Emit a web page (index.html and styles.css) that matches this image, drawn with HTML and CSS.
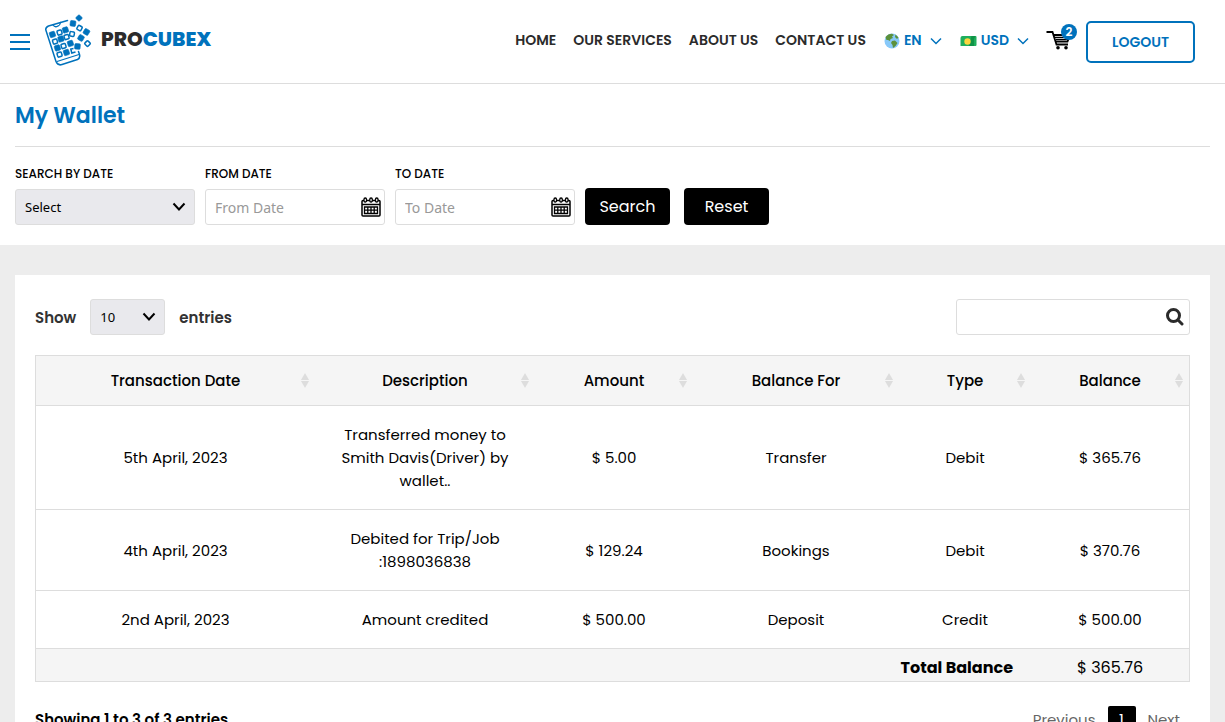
FILE: index.html
```html
<!DOCTYPE html>
<html lang="en">
<head>
    <meta charset="UTF-8">
    <meta name="viewport" content="width=device-width, initial-scale=1.0">
    <title>My Wallet</title>
    <link rel="stylesheet" href="styles.css">
</head>
<body>
    <header class="site-header">
        <button class="menu-toggle" type="button" aria-label="Menu">
            <span></span>
            <span></span>
            <span></span>
        </button>
        <a class="logo" href="#">
            <svg class="logo-mark" viewBox="44 14 48 52" aria-hidden="true">
                <g fill="none" stroke="#0072bc" stroke-linecap="round" stroke-linejoin="round">
                    <path stroke-width="1.5" d="M67.5 20.5 L48.5 26 Q45 27.5 46 30.5 L56 61.5 Q58 66 62 64.5 L77.5 59.5 Q80.5 58 79.5 54.5 L78.5 51.5"/>
                    <path stroke-width="1.3" d="M53 25 Q55 28 58 26 Q60 25.5 60.5 22.5"/>
                    <path stroke-width="1.3" d="M57 61.5 L79 54.5"/>
                </g>
                <g fill="#0072bc" stroke="#0072bc" stroke-width="0.6">
                    <rect x="49.7" y="31.7" width="5.5" height="5.5" rx="1" transform="rotate(-17 52.5 34.5)"/>
                    <rect x="62.7" y="27.2" width="5.5" height="5.5" rx="1" transform="rotate(-17 65.5 30)"/>
                    <rect x="58.2" y="36.2" width="5.5" height="5.5" rx="1" transform="rotate(-17 61 39)"/>
                    <rect x="54.7" y="45.2" width="5.5" height="5.5" rx="1" transform="rotate(-17 57.5 48)"/>
                    <rect x="67.7" y="40.7" width="5.5" height="5.5" rx="1" transform="rotate(-17 70.5 43.5)"/>
                    <rect x="63.7" y="49.7" width="5.5" height="5.5" rx="1" transform="rotate(-17 66.5 52.5)"/>
                    <rect x="74.7" y="43.7" width="5.5" height="5.5" rx="1" transform="rotate(5 77.5 46.5)"/>
                    <rect x="70.2" y="20.7" width="5.5" height="5.5" rx="1" transform="rotate(8 73 23.5)"/>
                    <rect x="76.5" y="15.5" width="5" height="5" rx="1" transform="rotate(45 79 18)"/>
                    <rect x="83.7" y="29.2" width="5.5" height="5.5" rx="1" transform="rotate(30 86.5 32)"/>
                    <rect x="78.2" y="35.2" width="5.5" height="5.5" rx="1" transform="rotate(30 81 38)"/>
                </g>
                <g fill="none" stroke="#0072bc" stroke-width="1.5">
                    <rect x="57.3" y="30.3" width="4.5" height="4.5" rx="1" transform="rotate(-17 59.5 32.5)"/>
                    <rect x="52.8" y="39.3" width="4.5" height="4.5" rx="1" transform="rotate(-17 55 41.5)"/>
                    <rect x="64.3" y="34.8" width="4.5" height="4.5" rx="1" transform="rotate(-17 66.5 37)"/>
                    <rect x="61.3" y="43.8" width="4.5" height="4.5" rx="1" transform="rotate(-17 63.5 46)"/>
                    <rect x="57.3" y="52.3" width="4.5" height="4.5" rx="1" transform="rotate(-17 59.5 54.5)"/>
                    <rect x="69.8" y="31.8" width="4.5" height="4.5" rx="1" transform="rotate(10 72 34)"/>
                    <path d="M73.5 48.5 L70.8 49 L71.8 53 L75.5 52"/>
                    <rect x="77.3" y="25.8" width="4.5" height="4.5" rx="1" transform="rotate(30 79.5 28)"/>
                    <rect x="85.3" y="41.3" width="4.5" height="4.5" rx="1" transform="rotate(45 87.5 43.5)"/>
                </g>
            </svg>
            <span class="logo-text">PRO<span>CUBEX</span></span>
        </a>
        <nav class="main-nav">
            <a href="#">HOME</a>
            <a href="#">OUR SERVICES</a>
            <a href="#">ABOUT US</a>
            <a href="#">CONTACT US</a>
            <button class="picker" type="button">
                <svg width="16" height="16" viewBox="0 0 16 16" aria-hidden="true">
                    <circle cx="8" cy="8" r="7.5" fill="#88c9f9"/>
                    <path fill="#5c913b" d="M1.5 4 Q4 0.8 8 0.7 L10 2 L8 3.5 L9 5 L6.5 6 L6 8 L4 7 L2.5 7 Z M8 8 L11 7.5 L13.5 10 L11.5 13 L9 15 L8.5 12 L7 10 Z M11.5 1.5 L14.5 4.5 L13 6 L11 4 Z"/>
                </svg>
                <span>EN</span>
                <svg class="chevron" width="12" height="8" viewBox="0 0 12 8" aria-hidden="true"><path d="M1 1.5 L6 6.5 L11 1.5"/></svg>
            </button>
            <button class="picker" type="button">
                <svg width="17" height="16" viewBox="0 0 17 16" aria-hidden="true">
                    <path fill="#1fae5c" d="M2.5 3 H15.5 Q16.500 3 16.5 4 V12 Q16.500 13 15.500 13 H0.5 V5 Q0.500 3 2.500 3 Z"/>
                    <path fill="#0f9347" d="M11.5 3 H15.5 L14 6 V13 H9 Z"/>
                    <circle cx="7.5" cy="8.5" r="3.2" fill="#fcd53f"/>
                </svg>
                <span>USD</span>
                <svg class="chevron" width="12" height="8" viewBox="0 0 12 8" aria-hidden="true"><path d="M1 1.5 L6 6.5 L11 1.5"/></svg>
            </button>
            <a class="cart" href="#" aria-label="Cart">
                <svg width="26" height="20" viewBox="0 0 26 20" aria-hidden="true">
                    <g fill="none" stroke="#000" stroke-width="1.8">
                        <path d="M0.5 2 H6.5 L10.5 14.5 H22"/>
                        <path d="M7.5 5 H24 L21.5 11.5 H10"/>
                        <path stroke-width="1.3" d="M9 7.3 H23 M10 9.4 H22"/>
                    </g>
                    <circle cx="12" cy="17.7" r="1.8"/>
                    <circle cx="20" cy="17.7" r="1.8"/>
                </svg>
                <span class="cart-count">2</span>
            </a>
        </nav>
        <button class="logout" type="button">LOGOUT</button>
    </header>

    <main>
        <section class="wallet-head">
            <h1>My Wallet</h1>
            <form class="filters">
                <div class="field">
                    <label for="search-by-date">SEARCH BY DATE</label>
                    <div class="select-box">
                        <select id="search-by-date">
                            <option>Select</option>
                        </select>
                        <svg width="14" height="10" viewBox="0 0 14 10" aria-hidden="true"><path d="M1.5 1.5 L7 7.5 L12.5 1.5"/></svg>
                    </div>
                </div>
                <div class="field">
                    <label for="from-date">FROM DATE</label>
                    <div class="date-box">
                        <input type="text" id="from-date" placeholder="From Date">
                        <svg width="20" height="20" viewBox="0 0 20 20" aria-hidden="true"><use href="#calendar"/></svg>
                    </div>
                </div>
                <div class="field">
                    <label for="to-date">TO DATE</label>
                    <div class="date-box">
                        <input type="text" id="to-date" placeholder="To Date">
                        <svg width="20" height="20" viewBox="0 0 20 20" aria-hidden="true">
                            <g id="calendar" fill="none" stroke="#000">
                                <rect x="1" y="3.5" width="18" height="15.5" rx="1" stroke-width="1.5"/>
                                <path stroke-width="1.5" d="M1 7.5 H19"/>
                                <g fill="#fff" stroke-width="1.3">
                                    <rect x="3" y="1" width="2.5" height="4" rx="1.2"/>
                                    <rect x="8.8" y="1" width="2.5" height="4" rx="1.2"/>
                                    <rect x="14.5" y="1" width="2.5" height="4" rx="1.2"/>
                                </g>
                                <path stroke-width="1.3" d="M3.5 10 H16.5 V16.5 H3.5 Z M3.5 13.2 H16.5 M6.8 10 V16.5 M10 10 V16.5 M13.2 10 V16.5"/>
                            </g>
                        </svg>
                    </div>
                </div>
                <div class="filter-buttons">
                    <button type="submit">Search</button>
                    <button type="reset">Reset</button>
                </div>
            </form>
        </section>

        <section class="transactions">
            <div class="table-tools">
                <div class="page-length">
                    <label for="entries">Show</label>
                    <div class="select-box">
                        <select id="entries">
                            <option>10</option>
                        </select>
                        <svg width="14" height="10" viewBox="0 0 14 10" aria-hidden="true"><path d="M1.5 1.5 L7 7.5 L12.5 1.5"/></svg>
                    </div>
                    <span>entries</span>
                </div>
                <div class="search-box">
                    <input type="search" aria-label="Search transactions">
                    <svg width="18" height="18" viewBox="0 0 18 18" aria-hidden="true">
                        <circle cx="7.5" cy="7.5" r="6"/>
                        <path d="M12 12 L16 16"/>
                    </svg>
                </div>
            </div>

            <table class="wallet-table">
                <colgroup>
                    <col class="col-date">
                    <col class="col-description">
                    <col class="col-amount">
                    <col class="col-for">
                    <col class="col-type">
                    <col class="col-balance">
                </colgroup>
                <thead>
                    <tr>
                        <th>Transaction Date</th>
                        <th>Description</th>
                        <th>Amount</th>
                        <th>Balance For</th>
                        <th>Type</th>
                        <th>Balance</th>
                    </tr>
                </thead>
                <tbody>
                    <tr>
                        <td>5th April, 2023</td>
                        <td>Transferred money to Smith Davis(Driver) by wallet..</td>
                        <td>$ 5.00</td>
                        <td>Transfer</td>
                        <td>Debit</td>
                        <td>$ 365.76</td>
                    </tr>
                    <tr>
                        <td>4th April, 2023</td>
                        <td>Debited for Trip/Job :1898036838</td>
                        <td>$ 129.24</td>
                        <td>Bookings</td>
                        <td>Debit</td>
                        <td>$ 370.76</td>
                    </tr>
                    <tr>
                        <td>2nd April, 2023</td>
                        <td>Amount credited</td>
                        <td>$ 500.00</td>
                        <td>Deposit</td>
                        <td>Credit</td>
                        <td>$ 500.00</td>
                    </tr>
                </tbody>
                <tfoot>
                    <tr>
                        <th colspan="5">Total Balance</th>
                        <td>$ 365.76</td>
                    </tr>
                </tfoot>
            </table>

            <div class="table-footer">
                <div class="table-info">Showing 1 to 3 of 3 entries</div>
                <div class="pagination">
                    <a href="#">Previous</a>
                    <a class="current" href="#">1</a>
                    <a href="#">Next</a>
                </div>
            </div>
        </section>
    </main>
</body>
</html>
```
FILE: styles.css
```css
* {
    box-sizing: border-box;
}
body {
    margin: 0;
    background-color: #ededed;
    color: #000;
    font-family: Poppins, Inter, sans-serif;
    font-size: 15px;
    line-height: 23px;
}
a {
    text-decoration: none;
}
button,
input,
select {
    font-family: inherit;
    margin: 0;
}
button {
    cursor: pointer;
}

/* header */
.site-header {
    display: flex;
    align-items: center;
    height: 84px;
    padding: 0 30px 0 10px;
    background-color: #fff;
    border-bottom: 1px solid #ddd;
}
.menu-toggle {
    display: flex;
    flex-direction: column;
    gap: 5px;
    width: 20px;
    padding: 0;
    background: none;
    border: none;
}
.menu-toggle span {
    height: 2px;
    background-color: #0072bc;
}
.logo {
    display: flex;
    align-items: center;
    gap: 9px;
    margin-left: 14px;
    padding-bottom: 4px;
}
.logo-mark {
    width: 48px;
    height: 52px;
}
.logo-text {
    color: #2b2b2b;
    font-size: 20px;
    font-weight: 800;
}
.logo-text span {
    color: #0072bc;
}
.main-nav {
    display: flex;
    align-items: center;
    gap: 17px;
    margin-left: auto;
    padding-bottom: 2px;
}
.main-nav a {
    color: #2b2b2b;
    font-size: 14px;
    font-weight: 600;
}
.picker {
    display: flex;
    align-items: center;
    gap: 4px;
    margin-left: 1px;
    padding: 0;
    background: none;
    border: none;
    color: #0072bc;
    font-size: 14px;
    font-weight: 600;
}
.chevron {
    margin-left: 4px;
    fill: none;
    stroke: #0072bc;
    stroke-width: 1.5;
}
.cart {
    position: relative;
    display: flex;
    padding-bottom: 2px;
}
.main-nav .cart-count {
    position: absolute;
    top: -6px;
    right: -5px;
    width: 16px;
    height: 16px;
    border-radius: 50%;
    background-color: #0072bc;
    color: #fff;
    font-size: 12px;
    line-height: 16px;
    text-align: center;
}
.logout {
    height: 42px;
    margin-left: 14px;
    padding: 2px 24px 0;
    background-color: #fff;
    border: 2px solid #0072bc;
    border-radius: 5px;
    color: #0072bc;
    font-size: 14px;
    font-weight: 600;
}

/* page head and filters */
.wallet-head {
    padding: 17px 15px 20px;
    background-color: #fff;
}
.wallet-head h1 {
    margin: 0 0 15px;
    padding-bottom: 15px;
    border-bottom: 1px solid #ddd;
    color: #0072bc;
    font-size: 22px;
    font-weight: 600;
    line-height: 30px;
}
.filters {
    display: flex;
    align-items: flex-end;
    gap: 10px;
}
.field {
    width: 180px;
}
.field label {
    display: block;
    margin-bottom: 4px;
    font-size: 12px;
    font-weight: 500;
}
.select-box,
.date-box,
.search-box {
    position: relative;
}
.select-box select,
.date-box input,
.search-box input {
    display: block;
    appearance: none;
    width: 100%;
    height: 36px;
    padding: 0 9px;
    border: 1px solid #ddd;
    border-radius: 3px;
    background-color: #fff;
    font-family: "Noto Sans", sans-serif;
    font-size: 14px;
}
.select-box select {
    background-color: #e9e9ed;
    color: #000;
    font-size: 13px;
}
.date-box input::placeholder {
    color: #999;
}
.select-box svg,
.date-box svg,
.search-box svg {
    position: absolute;
    pointer-events: none;
}
.select-box svg {
    top: 13px;
    right: 9px;
    fill: none;
    stroke: #000;
    stroke-width: 2;
}
.date-box svg {
    top: 8px;
    right: 4px;
}
.filter-buttons {
    display: flex;
    gap: 14px;
}
.filter-buttons button {
    width: 85px;
    height: 37px;
    padding: 0;
    background-color: #000;
    border: none;
    border-radius: 4px;
    color: #fff;
    font-size: 16px;
}

/* transactions */
.transactions {
    margin: 30px 15px;
    padding: 24px 20px;
    background-color: #fff;
}
.table-tools {
    display: flex;
    justify-content: space-between;
    margin-bottom: 20px;
}
.page-length {
    display: flex;
    align-items: center;
    gap: 14px;
    color: #333;
    font-weight: 600;
}
.page-length .select-box {
    width: 75px;
}
.search-box {
    width: 234px;
}
.search-box svg {
    top: 9px;
    right: 6px;
    fill: none;
    stroke: #2b2b2b;
    stroke-width: 3;
    stroke-linecap: round;
}
.wallet-table {
    width: 100%;
    table-layout: fixed;
    border: 1px solid #ddd;
    border-collapse: separate;
    border-spacing: 0;
    text-align: center;
}
.col-date {
    width: 279px;
}
.col-description {
    width: 220px;
}
.col-amount {
    width: 158px;
}
.col-for {
    width: 206px;
}
.col-type {
    width: 132px;
}
.col-balance {
    width: 158px;
}
.wallet-table td,
.wallet-table tfoot th {
    padding: 17px 20px;
    border-top: 1px solid #ddd;
}
.wallet-table thead,
.wallet-table tfoot {
    background-color: #f5f5f5;
}
.wallet-table thead th {
    position: relative;
    padding: 13px 20px;
    font-weight: 500;
}
/* sort arrows */
.wallet-table thead th::before,
.wallet-table thead th::after {
    content: "";
    position: absolute;
    right: 6px;
    border: 4px solid transparent;
}
.wallet-table thead th::before {
    top: 13px;
    border-bottom: 7px solid #ddd;
}
.wallet-table thead th::after {
    top: 25px;
    border-top: 7px solid #ddd;
}
.wallet-table tfoot th,
.wallet-table tfoot td {
    padding: 7px 18px 2px;
    font-size: 16px;
}
.wallet-table tfoot th {
    font-weight: 700;
    text-align: right;
}
.table-footer {
    display: flex;
    justify-content: space-between;
    align-items: center;
    margin-top: 24px;
}
.table-info {
    font-weight: 600;
}
.pagination {
    display: flex;
    gap: 2px;
}
.pagination a {
    min-width: 28px;
    padding: 2px 10px;
    border-radius: 2px;
    color: #666;
    text-align: center;
}
.pagination .current {
    background-color: #000;
    color: #fff;
}
```
